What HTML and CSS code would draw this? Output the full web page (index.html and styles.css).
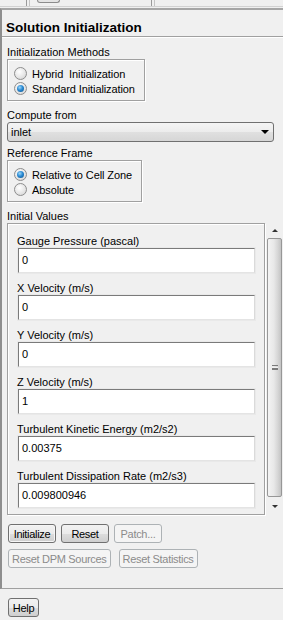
FILE: index.html
```html
<!DOCTYPE html>
<html lang="en">
<head>
    <meta charset="UTF-8">
    <meta name="viewport" content="width=device-width, initial-scale=1.0">
    <title>Solution Initialization</title>
    <link rel="stylesheet" href="styles.css">
</head>
<body>
    <div class="topbar">
        <span class="tb-edge"></span>
        <span class="tb-tab"></span>
        <span class="tb-edge tb-edge-right"></span>
    </div>

    <div class="panel">
        <div class="title">Solution Initialization</div>

        <div class="content">
            <div class="label">Initialization Methods</div>
            <div class="group">
                <div class="option"><span class="radio"></span>Hybrid&nbsp; Initialization</div>
                <div class="option"><span class="radio checked"></span>Standard Initialization</div>
            </div>

            <div class="label label-gap">Compute from</div>
            <div class="select">inlet<span class="caret"></span></div>

            <div class="label label-gap-sm">Reference Frame</div>
            <div class="group">
                <div class="option"><span class="radio checked"></span>Relative to Cell Zone</div>
                <div class="option"><span class="radio"></span>Absolute</div>
            </div>

            <div class="label label-gap">Initial Values</div>
            <div class="values-row">
                <div class="values">
                    <div class="field">
                        <div class="label">Gauge Pressure (pascal)</div>
                        <div class="input">0</div>
                    </div>
                    <div class="field">
                        <div class="label">X Velocity (m/s)</div>
                        <div class="input">0</div>
                    </div>
                    <div class="field">
                        <div class="label">Y Velocity (m/s)</div>
                        <div class="input">0</div>
                    </div>
                    <div class="field">
                        <div class="label">Z Velocity (m/s)</div>
                        <div class="input">1</div>
                    </div>
                    <div class="field">
                        <div class="label">Turbulent Kinetic Energy (m2/s2)</div>
                        <div class="input">0.00375</div>
                    </div>
                    <div class="field">
                        <div class="label">Turbulent Dissipation Rate (m2/s3)</div>
                        <div class="input">0.009800946</div>
                    </div>
                </div>
                <div class="scrollbar">
                    <div class="sb-arrow sb-up"></div>
                    <div class="sb-thumb"><span class="grip"></span></div>
                    <div class="sb-arrow sb-down"></div>
                </div>
            </div>

            <div class="buttons">
                <button class="btn focus">Initialize</button>
                <button class="btn">Reset</button>
                <button class="btn" disabled>Patch...</button>
            </div>
            <div class="buttons buttons-second">
                <button class="btn" disabled>Reset DPM Sources</button>
                <button class="btn" disabled>Reset Statistics</button>
            </div>
        </div>
    </div>

    <div class="footer">
        <button class="btn">Help</button>
    </div>
</body>
</html>
```

FILE: styles.css
```css
* {
    margin: 0;
    padding: 0;
    box-sizing: border-box;
}

body {
    font-family: 'Liberation Sans', Arial, sans-serif;
    font-size: 11px;
    color: #000;
    background: #f0f0f0;
    width: 283px;
    height: 620px;
    overflow: hidden;
}

/* strip of the tab bar above the panel */
.topbar {
    height: 7px;
    display: flex;
    align-items: flex-start;
    border-bottom: 1px solid #d2d2d2;
    margin-bottom: 1px;
}

.tb-edge {
    width: 4px;
    height: 6px;
    margin-left: 26px;
    border-left: 1px solid #9a9a9a;
    border-right: 1px solid #c4c4c4;
}

.tb-edge-right {
    margin-left: 91px;
}

.tb-tab {
    width: 23px;
    height: 3px;
    margin-left: 7px;
    border: 1px solid #8c8c8c;
    border-top: none;
    border-radius: 0 0 3px 3px;
    background: #e4e4e4;
}

.panel {
    border-top: 2px solid #a6a6a6;
    border-left: 2px solid #8e8e8e;
    border-bottom: 1px solid #a0a0a0;
    padding-bottom: 20px;
}

.title {
    padding: 9px 4px 0;
    height: 27px;
    font-size: 13.5px;
    font-weight: bold;
    line-height: 17px;
    border-bottom: 1px solid #a0a0a0;
    box-shadow: 0 1px 0 #fff;
}

.content {
    padding: 8px 1px 0 5px;
}

.label {
    line-height: 14px;
    white-space: nowrap;
}

.label-gap {
    margin-top: 7px;
}

.label-gap-sm {
    margin-top: 4px;
}

.group {
    width: fit-content;
    height: 42px;
    padding: 6px 9px 4px 6px;
    border: 1px solid #a0a0a0;
    box-shadow: inset 1px 1px 0 #fff, 1px 1px 0 #fff;
}

.option {
    display: flex;
    align-items: center;
    height: 15px;
    white-space: nowrap;
    letter-spacing: -0.1px;
}

.radio {
    width: 13px;
    height: 13px;
    margin-right: 5px;
    border: 1px solid #8d8d8d;
    border-radius: 50%;
    background: radial-gradient(circle at 40% 35%, #ffffff 0%, #e6e6e6 55%, #cfcfcf 100%);
    display: flex;
    align-items: center;
    justify-content: center;
}

.radio.checked::after {
    content: '';
    width: 7px;
    height: 7px;
    border-radius: 50%;
    background: radial-gradient(circle at 40% 35%, #9fd8f7 0%, #2a8ad4 45%, #0b4f86 100%);
}

.select {
    position: relative;
    height: 20px;
    margin-right: 8px;
    padding-left: 3px;
    line-height: 18px;
    border: 1px solid #707070;
    border-radius: 3px;
    background: linear-gradient(#f4f4f4 0%, #ececec 50%, #e0e0e0 51%, #d6d6d6 100%);
}

.caret {
    position: absolute;
    right: 4px;
    top: 7px;
    width: 0;
    height: 0;
    border-left: 4px solid transparent;
    border-right: 4px solid transparent;
    border-top: 4px solid #000;
}

.values-row {
    display: flex;
    height: 292px;
}

.values {
    flex: 1;
    padding: 10px 9px 0 9px;
    border: 1px solid #a0a0a0;
    box-shadow: inset 1px 1px 0 #fff, 1px 1px 0 #fff;
}

.field {
    margin-bottom: 8px;
}

.input {
    height: 25px;
    margin-left: 1px;
    padding-left: 3px;
    line-height: 23px;
    background: #fff;
    border: 1px solid;
    border-color: #7a7a7a #dadada #e4e4e4 #7a7a7a;
    box-shadow: 0 0 0 1px #e9e9e9;
}

.scrollbar {
    width: 15px;
    margin-left: 2px;
    display: flex;
    flex-direction: column;
}

.sb-arrow {
    display: flex;
    justify-content: center;
    align-items: center;
}

.sb-up {
    height: 15px;
}

.sb-down {
    height: 18px;
}

.sb-up::after,
.sb-down::after {
    content: '';
    width: 0;
    height: 0;
    border-left: 3px solid transparent;
    border-right: 3px solid transparent;
}

.sb-up::after {
    border-bottom: 3px solid #333;
}

.sb-down::after {
    border-top: 3px solid #333;
}

.sb-thumb {
    flex: 1;
    border: 1px solid #979797;
    border-radius: 2px;
    background: linear-gradient(90deg, #f3f3f3 0%, #e8e8e8 45%, #d6d6d6 75%, #c4c4c4 100%);
    display: flex;
    align-items: center;
    justify-content: center;
}

.grip {
    width: 6px;
    height: 5px;
    border-top: 1px solid #7a7a7a;
    border-bottom: 1px solid #7a7a7a;
    background: linear-gradient(#f0f0f0 0 1px, #7a7a7a 1px 2px, transparent 2px);
    background-position: 0 1px;
    background-repeat: no-repeat;
}

.buttons {
    display: flex;
    gap: 5px;
    margin-top: 9px;
    padding-left: 1px;
}

.buttons-second {
    gap: 8px;
    margin-top: 6px;
}

.btn {
    font-family: 'Liberation Sans', Arial, sans-serif;
    font-size: 11px;
    letter-spacing: -0.3px;
    color: #000;
    height: 19px;
    min-width: 48px;
    padding: 0 3px;
    border: 1px solid #707070;
    border-radius: 3px;
    background: linear-gradient(#f2f2f2 0%, #ebebeb 50%, #dddddd 51%, #cfcfcf 100%);
    white-space: nowrap;
}

.btn.focus {
    box-shadow: inset 0 0 0 1px #f6f6f6;
}

.btn:disabled {
    color: #8b8b8b;
    border-color: #adb2b5;
    background: #f4f4f4;
}

.footer {
    padding: 9px 0 0 8px;
}

.footer .btn {
    min-width: 0;
    width: 31px;
    padding: 0;
}
```
